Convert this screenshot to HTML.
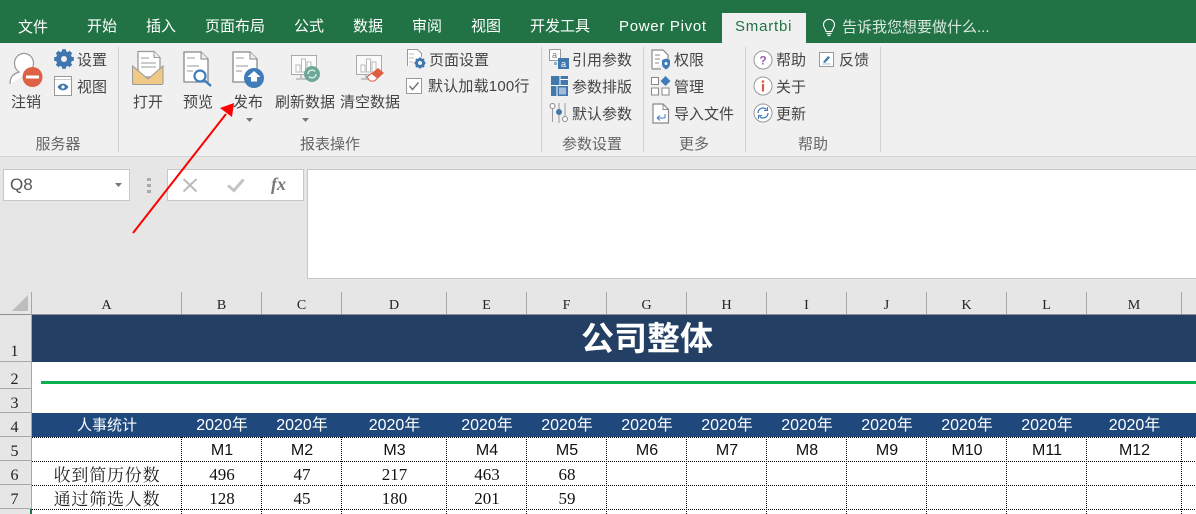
<!DOCTYPE html>
<html lang="zh"><head><meta charset="utf-8">
<style>
html,body{margin:0;padding:0;width:1196px;height:514px;overflow:hidden;background:#e6e6e6}
body{position:relative;font-family:"Liberation Sans","Noto Sans CJK SC",sans-serif;font-size:15px;color:#444}
.a,.t,.c,.v,.h,.r,.n{position:absolute;white-space:nowrap}
.a{display:block}
.t{line-height:20px;color:#444;font-size:15px;margin-top:1px}
.c{line-height:20px;text-align:center;color:#444;font-size:15px;margin-top:1px}
.tab{position:absolute;top:17px;line-height:20px;color:#fff;font-size:15px;white-space:nowrap}
.g{position:absolute;top:135px;line-height:20px;text-align:center;color:#666;font-size:15px;white-space:nowrap}
.sep{position:absolute;top:47px;height:105px;width:1px;background:#d0d0d0}
.h{top:296px;height:18px;line-height:20px;text-align:center;font-family:"Liberation Serif","Noto Serif CJK SC",serif;font-size:14px;color:#222}
.hl{position:absolute;top:292px;height:22px;width:1px;background:#a8a8a8}
.r{left:0;width:29px;text-align:center;font-family:"Liberation Serif",serif;font-size:16px;color:#222}
.rl{position:absolute;left:0;width:31px;height:1px;background:#a8a8a8}
.y{position:absolute;top:416px;line-height:20px;height:20px;color:#fff;text-align:center;font-size:16px;white-space:nowrap}
.m{position:absolute;top:441px;line-height:20px;color:#111;text-align:center;font-size:16px}
.n{line-height:20px;color:#111;text-align:center;font-family:"Liberation Serif",serif;font-size:17px}
.l{position:absolute;left:32px;width:150px;text-align:center;line-height:24px;font-family:"Noto Serif CJK SC",serif;font-size:17px;color:#222;letter-spacing:.8px}
.dh{position:absolute;left:32px;width:1164px;height:1px;background-image:linear-gradient(90deg,#000 50%,#fff 50%);background-size:2px 1px}
.dv{position:absolute;top:437px;height:77px;width:1px;background-image:linear-gradient(#000 50%,#fff 50%);background-size:1px 2px}
svg{position:absolute;overflow:visible}
</style></head><body>

<!-- title bar / tabs -->
<div class="a" style="left:0;top:0;width:1196px;height:43px;background:#217346"></div>
<div class="a" style="left:722px;top:13px;width:84px;height:30px;background:#f0f0f0"></div>
<span class="tab" style="left:18px;top:18px">文件</span>
<span class="tab" style="left:87px">开始</span>
<span class="tab" style="left:146px">插入</span>
<span class="tab" style="left:205px">页面布局</span>
<span class="tab" style="left:294px">公式</span>
<span class="tab" style="left:353px">数据</span>
<span class="tab" style="left:412px">审阅</span>
<span class="tab" style="left:471px">视图</span>
<span class="tab" style="left:530px">开发工具</span>
<span class="tab" style="left:619px;font-size:15px;letter-spacing:.7px">Power Pivot</span>
<span class="tab" style="left:735px;color:#217346;font-size:15px;letter-spacing:.8px">Smartbi</span>
<svg style="left:820px;top:18px" width="18" height="20" viewBox="0 0 18 20" fill="none" stroke="#fff" stroke-width="1.1"><path d="M6 13.5C6 11 3.5 10 3.5 6.8a5.5 5.5 0 0 1 11 0C14.500 10 12 11 12 13.500z"/><path d="M6.500 15.500h5M7.500 17.500h3" stroke-width="1.300"/></svg>
<span class="tab" style="left:842px;top:18px;color:#dbe9e0">告诉我您想要做什么...</span>

<!-- ribbon -->
<div class="a" style="left:0;top:43px;width:1196px;height:113px;background:#f0f0f0"></div>
<div class="a" style="left:0;top:156px;width:1196px;height:1px;background:#d4d4d4"></div>
<div class="sep" style="left:118px"></div>
<div class="sep" style="left:541px"></div>
<div class="sep" style="left:643px"></div>
<div class="sep" style="left:745px"></div>
<div class="sep" style="left:880px"></div>

<!-- server group -->
<svg style="left:8px;top:50px" width="36" height="36" viewBox="0 0 36 36"><path d="M2 34c0-7 3-10 9-12-3-2-4.500-5-4.500-9a9.500 9.500 0 0 1 19 0c0 4-1.500 7-4.500 9" fill="#fff" stroke="#999" stroke-width="1.200"/><circle cx="24.500" cy="27" r="10" fill="#dd6145"/><rect x="18" y="25.500" width="13" height="3" fill="#fff"/></svg>
<span class="c" style="left:6px;width:40px;top:92px">注销</span>
<svg style="left:54px;top:49px" width="20" height="20" viewBox="0 0 20 20"><circle cx="10" cy="10" r="5.500" fill="none" stroke="#3f76ad" stroke-width="5"/><path d="M10 .2v4M10 15.800v4M.2 10h4M15.800 10h4M3.100 3.100l2.800 2.800M14.100 14.100l2.800 2.800M3.100 16.900l2.800-2.800M14.100 5.900l2.800-2.800" stroke="#3f76ad" stroke-width="4"/></svg>
<span class="t" style="left:77px;top:50px">设置</span>
<svg style="left:54px;top:76px" width="20" height="20" viewBox="0 0 20 20"><rect x=".5" y=".5" width="17" height="19" fill="#fff" stroke="#999"/><path d="M1 3.500h16" stroke="#ccc"/><path d="M3.500 11c3-4.500 8-4.500 11 0-3 4.500-8 4.500-11 0z" fill="#3f76ad"/><circle cx="9" cy="11" r="1.600" fill="#fff"/></svg>
<span class="t" style="left:77px;top:77px">视图</span>
<span class="g" style="left:30px;width:56px">服务器</span>

<!-- report group -->
<svg style="left:131px;top:50px" width="36" height="36" viewBox="0 0 36 36"><path d="M7 27V1.500h16l6 6V27z" fill="#fff" stroke="#999" stroke-width="1.300"/><path d="M23 1.500v6h6" fill="#eee" stroke="#999"/><path d="M10 8h8M10 13h15M10 17h15" stroke="#bbb" stroke-width="1.500"/><path d="M1.500 16v17a1.500 1.500 0 0 0 1.500 1.500h27.500a1.500 1.500 0 0 0 1.500-1.500V16L17 29z" fill="#f0c987" stroke="#999"/></svg>
<span class="c" style="left:128px;width:40px;top:92px">打开</span>
<svg style="left:183px;top:51px" width="30" height="36" viewBox="0 0 30 36"><path d="M1 31V1h17l7 7v23z" fill="#fff" stroke="#888" stroke-width="1.300"/><path d="M18 1v7h7" fill="#eee" stroke="#888"/><path d="M4 7h8M4 15h12M4 20h6" stroke="#bbb" stroke-width="1.400"/><circle cx="17" cy="25" r="5.500" fill="#fff" stroke="#3f7cba" stroke-width="2.200"/><path d="M21 29l7 6" stroke="#3f7cba" stroke-width="2.400"/></svg>
<span class="c" style="left:178px;width:40px;top:92px">预览</span>
<svg style="left:232px;top:51px" width="34" height="36" viewBox="0 0 34 36"><path d="M1 31V1h17l7 7v23z" fill="#fff" stroke="#888" stroke-width="1.300"/><path d="M18 1v7h7" fill="#eee" stroke="#888"/><path d="M4 7h8M4 15h12M4 20h6" stroke="#bbb" stroke-width="1.400"/><circle cx="22" cy="27" r="10" fill="#3f7cba"/><path d="M22 20l6.500 6h-3.500v4.500h-6V26h-3.500z" fill="#fff"/></svg>
<span class="c" style="left:228px;width:40px;top:92px">发布</span>
<svg style="left:246px;top:118px" width="8" height="5"><path d="M0 0h7L3.500 4z" fill="#777"/></svg>
<svg style="left:291px;top:55px" width="30" height="30" viewBox="0 0 30 30"><rect x=".5" y=".5" width="25" height="19" fill="#fafafa" stroke="#aaa"/><path d="M5 10h4v7H5zM10.500 4h4v13h-4zM16 7h4v10h-4z" fill="#fff" stroke="#bbb"/><path d="M10 20v3M5 24h12" stroke="#aaa" stroke-width="1.300"/><circle cx="21" cy="19" r="8" fill="#6fa796"/><path d="M17 19a4 4 0 0 1 7-2.500M25 19a4 4 0 0 1-7 2.500" fill="none" stroke="#dcefe8" stroke-width="1.400"/></svg>
<span class="c" style="left:272px;width:66px;top:92px">刷新数据</span>
<svg style="left:302px;top:118px" width="8" height="5"><path d="M0 0h7L3.500 4z" fill="#777"/></svg>
<svg style="left:356px;top:55px" width="30" height="30" viewBox="0 0 30 30"><rect x=".5" y=".5" width="25" height="19" fill="#fafafa" stroke="#aaa"/><path d="M5 10h4v7H5zM10.500 4h4v13h-4zM16 7h4v10h-4z" fill="#fff" stroke="#bbb"/><path d="M10 20v3M5 24h8" stroke="#aaa" stroke-width="1.300"/><path d="M11 22l11-9 6 5-9 8h-5z" fill="#dd5f42"/><path d="M11 22l4.500-3.800 6 4.800-3 3h-4.500z" fill="#fff" stroke="#dd5f42"/></svg>
<span class="c" style="left:337px;width:66px;top:92px">清空数据</span>
<svg style="left:406px;top:49px" width="20" height="20" viewBox="0 0 20 20"><path d="M1.500 17V.5h10l4 4V8" fill="#fff" stroke="#999"/><path d="M3 5h5M3 9h5M3 13h4" stroke="#bbb"/><circle cx="14" cy="14" r="3.500" fill="none" stroke="#3f76ad" stroke-width="3"/><path d="M14 8.500v2M14 17.500v2M8.500 14h2M17.500 14h2M10 10l1.500 1.500M16.500 16.500l1.500 1.500M10 18l1.500-1.500M16.500 11.500l1.500-1.500" stroke="#3f76ad" stroke-width="1.800"/></svg>
<span class="t" style="left:429px;top:50px">页面设置</span>
<svg style="left:406px;top:78px" width="16" height="16" viewBox="0 0 16 16"><rect x=".5" y=".5" width="15" height="15" fill="#fff" stroke="#999"/><path d="M3.500 8l3 3.500 6-7" fill="none" stroke="#777" stroke-width="1.500"/></svg>
<span class="t" style="left:428px;top:76px;letter-spacing:.2px">默认加载100行</span>
<span class="g" style="left:290px;width:80px">报表操作</span>

<!-- param group -->
<svg style="left:549px;top:49px" width="20" height="20" viewBox="0 0 20 20"><rect x=".5" y=".5" width="11" height="11" fill="#fff" stroke="#999"/><text x="3" y="9" font-size="9" fill="#777" font-family="Liberation Sans">a</text><rect x="9" y="9" width="11" height="11" fill="#4378ae"/><text x="12" y="18" font-size="9" fill="#fff" font-family="Liberation Sans">a</text><rect x="5" y="13" width="3" height="3" fill="#8fb2d3"/></svg>
<span class="t" style="left:572px;top:50px">引用参数</span>
<svg style="left:551px;top:76px" width="17" height="20" viewBox="0 0 17 20"><rect width="17" height="20" fill="#4378ae"/><path d="M9 0v9M0 9.500h17M9 3.500h8M6 9.500V20" stroke="#fff"/><rect x="8" y="11.500" width="7" height="7" fill="#9fbcd8"/></svg>
<span class="t" style="left:572px;top:77px">参数排版</span>
<svg style="left:549px;top:102px" width="20" height="22" viewBox="0 0 20 22"><path d="M3.500 7v13M10 1v20M16 1v13" stroke="#999"/><circle cx="3.500" cy="4" r="2.500" fill="#fff" stroke="#888"/><circle cx="10" cy="10" r="3" fill="#4378ae"/><circle cx="16" cy="17" r="2.500" fill="#fff" stroke="#888"/></svg>
<span class="t" style="left:572px;top:104px">默认参数</span>
<span class="g" style="left:552px;width:80px">参数设置</span>

<!-- more group -->
<svg style="left:651px;top:49px" width="20" height="21" viewBox="0 0 20 21"><path d="M1 20V1h11l5 5v6" fill="#fff" stroke="#888" stroke-width="1.200"/><path d="M1 20h9" stroke="#888" stroke-width="1.200"/><path d="M4 6h5M4 10h5M4 14h4" stroke="#888"/><path d="M11 11l4-1.500 4 1.500v4c0 3-2.500 4.500-4 5.500-1.500-1-4-2.500-4-5.500z" fill="#3f7cba"/><circle cx="15" cy="14.500" r="1.500" fill="#fff"/></svg>
<span class="t" style="left:674px;top:50px">权限</span>
<svg style="left:651px;top:76px" width="20" height="20" viewBox="0 0 20 20"><rect x=".5" y="1.500" width="7" height="7" fill="#fff" stroke="#888"/><path d="M14.500 0l5 5-5 5-5-5z" fill="#3f7cba"/><rect x=".5" y="12" width="7" height="7" fill="#fff" stroke="#888"/><rect x="11" y="12" width="7" height="7" fill="#fff" stroke="#888"/></svg>
<span class="t" style="left:674px;top:77px">管理</span>
<svg style="left:652px;top:103px" width="18" height="21" viewBox="0 0 18 21"><path d="M1 20V1h10l5.500 5.500V20z" fill="#fff" stroke="#888" stroke-width="1.200"/><path d="M11 1v5.500h5.500" fill="none" stroke="#888"/><path d="M5 15h8M5 15l3-2.500M5 15l3 2.500M13 11v4" fill="none" stroke="#3f7cba"/></svg>
<span class="t" style="left:674px;top:104px">导入文件</span>
<span class="g" style="left:664px;width:60px">更多</span>

<!-- help group -->
<svg style="left:753px;top:50px" width="20" height="20" viewBox="0 0 20 20"><circle cx="10" cy="10" r="9" fill="#fff" stroke="#999"/><text x="10" y="14.500" text-anchor="middle" font-size="12" font-weight="bold" fill="#9460b8" font-family="Liberation Sans">?</text></svg>
<span class="t" style="left:776px;top:50px">帮助</span>
<svg style="left:753px;top:76px" width="20" height="20" viewBox="0 0 20 20"><circle cx="10" cy="10" r="9" fill="#fff" stroke="#999"/><path d="M10 8v7.500" stroke="#d95a3d" stroke-width="2.200"/><circle cx="10" cy="5.500" r="1.300" fill="#d95a3d"/></svg>
<span class="t" style="left:776px;top:77px">关于</span>
<svg style="left:753px;top:103px" width="20" height="20" viewBox="0 0 20 20"><circle cx="10" cy="10" r="9" fill="#fff" stroke="#999"/><path d="M5 10a5 5 0 0 1 8.500-3.500M15 10a5 5 0 0 1-8.500 3.500" fill="none" stroke="#3f7cba" stroke-width="1.300"/><path d="M14.500 4v3.500H11M5.500 16v-3.500H9" fill="none" stroke="#3f7cba"/></svg>
<span class="t" style="left:776px;top:104px">更新</span>
<svg style="left:819px;top:52px" width="15" height="15" viewBox="0 0 15 15"><rect x=".5" y=".5" width="14" height="14" fill="#fff" stroke="#999"/><path d="M4 10l5-6 2 1.500-5 5.500z" fill="#3f7cba"/><path d="M3 12h9" stroke="#a8c4de"/></svg>
<span class="t" style="left:839px;top:50px">反馈</span>
<span class="g" style="left:783px;width:60px">帮助</span>

<!-- formula bar -->
<div class="a" style="left:3px;top:169px;width:125px;height:30px;background:#fff;border:1px solid #c8c8c8"></div>
<span class="a" style="left:10px;top:175px;font-size:17px;line-height:20px;color:#555">Q8</span>
<svg style="left:115px;top:183px" width="8" height="5"><path d="M0 0h7L3.500 4z" fill="#777"/></svg>
<div class="a" style="left:147px;top:178px;width:4px;height:3px;background:#aaa"></div>
<div class="a" style="left:147px;top:184px;width:4px;height:3px;background:#aaa"></div>
<div class="a" style="left:147px;top:190px;width:4px;height:3px;background:#aaa"></div>
<div class="a" style="left:167px;top:169px;width:135px;height:30px;background:#fff;border:1px solid #c8c8c8"></div>
<svg style="left:182px;top:178px" width="17" height="15"><path d="M1.500 1l13 12.500M14.500 1l-13 12.500" stroke="#bbb" stroke-width="2"/></svg>
<svg style="left:227px;top:178px" width="18" height="15"><path d="M1 7.500l6 5 9.500-11" fill="none" stroke="#c4c4c4" stroke-width="3"/></svg>
<span class="a" style="left:271px;top:173px;font:italic bold 18px/22px 'Liberation Serif',serif;color:#777">fx</span>
<div class="a" style="left:307px;top:169px;width:889px;height:108px;background:#fff;border:1px solid #c8c8c8;border-right:0"></div>

<!-- column headers -->
<div class="a" style="left:0;top:292px;width:1196px;height:23px;background:#e6e6e6"></div>
<div class="a" style="left:0;top:314px;width:1196px;height:1px;background:#8f8f8f"></div>
<svg style="left:12px;top:295px" width="17" height="17"><path d="M16 0v16H0z" fill="#bdbdbd"/></svg>
<div class="hl" style="left:31px"></div><div class="hl" style="left:181px"></div><div class="hl" style="left:261px"></div><div class="hl" style="left:341px"></div><div class="hl" style="left:446px"></div><div class="hl" style="left:526px"></div><div class="hl" style="left:606px"></div><div class="hl" style="left:686px"></div><div class="hl" style="left:766px"></div><div class="hl" style="left:846px"></div><div class="hl" style="left:926px"></div><div class="hl" style="left:1006px"></div><div class="hl" style="left:1086px"></div><div class="hl" style="left:1181px"></div>
<span class="h" style="left:32px;width:149px">A</span><span class="h" style="left:182px;width:79px">B</span><span class="h" style="left:262px;width:79px">C</span><span class="h" style="left:342px;width:104px">D</span><span class="h" style="left:447px;width:79px">E</span><span class="h" style="left:527px;width:79px">F</span><span class="h" style="left:607px;width:79px">G</span><span class="h" style="left:687px;width:79px">H</span><span class="h" style="left:767px;width:79px">I</span><span class="h" style="left:847px;width:79px">J</span><span class="h" style="left:927px;width:79px">K</span><span class="h" style="left:1007px;width:79px">L</span><span class="h" style="left:1087px;width:94px">M</span>

<!-- row headers -->
<div class="a" style="left:31px;top:292px;width:1px;height:222px;background:#a8a8a8"></div>
<div class="rl" style="top:361px"></div><div class="rl" style="top:388px"></div><div class="rl" style="top:412px"></div><div class="rl" style="top:436px"></div><div class="rl" style="top:460px"></div><div class="rl" style="top:484px"></div><div class="rl" style="top:508px"></div>
<span class="r" style="top:343px">1</span><span class="r" style="top:371px">2</span><span class="r" style="top:395px">3</span><span class="r" style="top:419px">4</span><span class="r" style="top:443px">5</span><span class="r" style="top:467px">6</span><span class="r" style="top:491px">7</span>
<div class="a" style="left:30px;top:509px;width:2px;height:5px;background:#217346"></div>

<!-- sheet -->
<div class="a" style="left:32px;top:315px;width:1164px;height:199px;background:#fff"></div>
<div class="a" style="left:32px;top:315px;width:1164px;height:47px;background:#234064"></div>
<div class="a" style="top:317px;left:32px;width:1230px;text-align:center;font-size:33px;line-height:44px;font-weight:bold;color:#fff;white-space:nowrap">公司整体</div>
<div class="a" style="left:41px;top:381px;width:1155px;height:3px;background:#0cb14f"></div>
<div class="a" style="left:32px;top:413px;width:1164px;height:24px;background:#1f497d"></div>

<span class="y" style="left:32px;width:150px;top:416px;font-size:15px">人事统计</span>
<span class="y" style="left:182px;width:80px">2020年</span><span class="y" style="left:262px;width:80px">2020年</span><span class="y" style="left:342px;width:105px">2020年</span><span class="y" style="left:447px;width:80px">2020年</span><span class="y" style="left:527px;width:80px">2020年</span><span class="y" style="left:607px;width:80px">2020年</span><span class="y" style="left:687px;width:80px">2020年</span><span class="y" style="left:767px;width:80px">2020年</span><span class="y" style="left:847px;width:80px">2020年</span><span class="y" style="left:927px;width:80px">2020年</span><span class="y" style="left:1007px;width:80px">2020年</span><span class="y" style="left:1087px;width:95px">2020年</span>

<span class="m" style="left:182px;width:80px">M1</span><span class="m" style="left:262px;width:80px">M2</span><span class="m" style="left:342px;width:105px">M3</span><span class="m" style="left:447px;width:80px">M4</span><span class="m" style="left:527px;width:80px">M5</span><span class="m" style="left:607px;width:80px">M6</span><span class="m" style="left:687px;width:80px">M7</span><span class="m" style="left:767px;width:80px">M8</span><span class="m" style="left:847px;width:80px">M9</span><span class="m" style="left:927px;width:80px">M10</span><span class="m" style="left:1007px;width:80px">M11</span><span class="m" style="left:1087px;width:95px">M12</span>

<div class="l" style="top:462px">收到简历份数</div>
<div class="l" style="top:486px">通过筛选人数</div>
<span class="n" style="left:182px;width:80px;top:465px">496</span><span class="n" style="left:262px;width:80px;top:465px">47</span><span class="n" style="left:342px;width:105px;top:465px">217</span><span class="n" style="left:447px;width:80px;top:465px">463</span><span class="n" style="left:527px;width:80px;top:465px">68</span>
<span class="n" style="left:182px;width:80px;top:489px">128</span><span class="n" style="left:262px;width:80px;top:489px">45</span><span class="n" style="left:342px;width:105px;top:489px">180</span><span class="n" style="left:447px;width:80px;top:489px">201</span><span class="n" style="left:527px;width:80px;top:489px">59</span>

<div class="dh" style="top:437px"></div><div class="dh" style="top:461px"></div><div class="dh" style="top:485px"></div><div class="dh" style="top:509px"></div>
<div class="dv" style="left:181px"></div><div class="dv" style="left:261px"></div><div class="dv" style="left:341px"></div><div class="dv" style="left:446px"></div><div class="dv" style="left:526px"></div><div class="dv" style="left:606px"></div><div class="dv" style="left:686px"></div><div class="dv" style="left:766px"></div><div class="dv" style="left:846px"></div><div class="dv" style="left:926px"></div><div class="dv" style="left:1006px"></div><div class="dv" style="left:1086px"></div><div class="dv" style="left:1181px"></div>

<!-- red arrow -->
<svg style="left:0;top:0" width="1196" height="514"><path d="M133 233L226 114" stroke="#f00" stroke-width="2" fill="none"/><path d="M234 103L220 108 232 117z" fill="#f00"/></svg>

</body></html>
